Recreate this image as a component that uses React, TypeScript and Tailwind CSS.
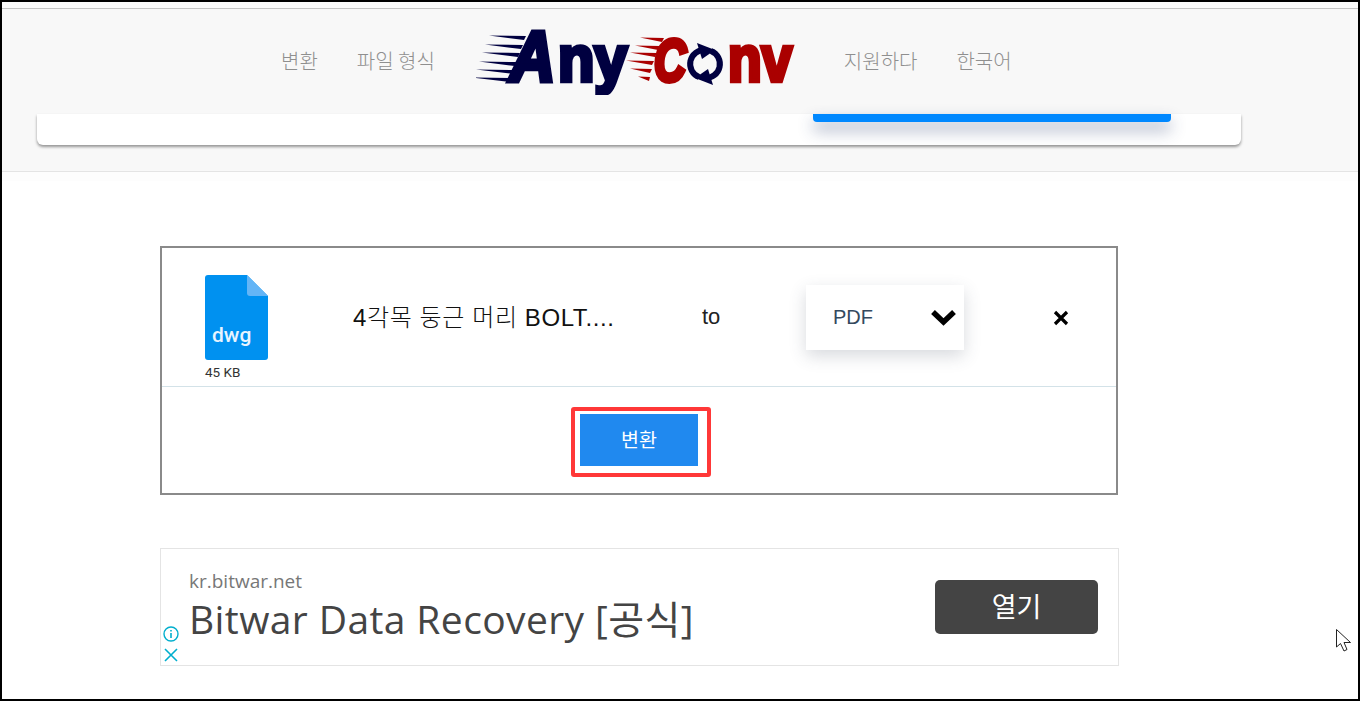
const sans = "font-['Noto_Sans_CJK_KR','Noto_Sans',sans-serif]";

function Logo() {
  const navyLines = [
    [489, 36.5, 526, 37, 524, 41],
    [485, 45.5, 523, 46, 521, 50],
    [482, 53.5, 520, 54, 518, 58],
    [479, 62.5, 517, 63, 515, 67],
    [475, 70.5, 515, 71, 514, 75],
    [472, 78.5, 512, 79, 511, 83],
  ];
  const redLines = [
    [640, 38.5, 664, 39, 662, 43],
    [635, 46.5, 660, 47, 658, 51],
    [630, 53.5, 657, 54, 655, 58],
    [626, 61.5, 654, 62, 652, 66],
    [630, 69.5, 652, 70, 650, 74],
    [638, 77.5, 650, 78, 649, 82],
  ];
  return (
    <svg width="320" height="68" viewBox="476 28 320 68" className="shrink-0">
      {navyLines.map(([x0, y0, x1, y1, x2, y2], i) => (
        <polygon key={i} points={`${x0},${y0} ${x1},${y1} ${x2},${y2}`} fill="#000040" />
      ))}
      {redLines.map(([x0, y0, x1, y1, x2, y2], i) => (
        <polygon key={i} points={`${x0},${y0} ${x1},${y1} ${x2},${y2}`} fill="#aa0000" />
      ))}
      <g fontFamily="'Liberation Sans', sans-serif" fontWeight="700">
        <text transform="translate(510 81.5) scale(0.88 1)" fontSize="71" fontStyle="italic" fill="#000040" stroke="#000040" strokeWidth="5">A</text>
        <text transform="translate(558 81.5) scale(0.93 1)" fontSize="64" fill="#000040" stroke="#000040" strokeWidth="4.5">ny</text>
        <text transform="translate(654 81.5) scale(0.74 1)" fontSize="60" fontStyle="italic" fill="#aa0000" stroke="#aa0000" strokeWidth="5">C</text>
        <text transform="translate(728 81.5) scale(0.86 1)" fontSize="64" fill="#aa0000" stroke="#aa0000" strokeWidth="4.5">nv</text>
      </g>
      <g fill="none" stroke="#000040" strokeWidth="6">
        <path d="M705 51 A14 14 0 0 0 699 78" />
        <path d="M705 79 A14 14 0 0 0 711 52" />
      </g>
      <polygon points="697,44 715,51 702,60" fill="#000040" />
      <polygon points="713,86 695,79 708,70" fill="#000040" />
    </svg>
  );
}

function NavLink({ label }: { label: string }) {
  return <span className="text-[20px] leading-none font-light text-[#8f8f8f] whitespace-nowrap">{label}</span>;
}

function FileIcon() {
  return (
    <svg width="63" height="85" viewBox="0 0 63 85" className="block">
      <path d="M3 0 H42 L63 21 V82 A3 3 0 0 1 60 85 H3 A3 3 0 0 1 0 82 V3 A3 3 0 0 1 3 0 Z" fill="#0091f0" />
      <path d="M42 0 L63 21 H45 A3 3 0 0 1 42 18 Z" fill="#64b5f6" />
      <text x="7" y="67" fontSize="21" fontWeight="500" fill="#e8f4ff" fontFamily="Roboto, sans-serif">dwg</text>
    </svg>
  );
}

export default function App() {
  return (
    <div className={`relative w-[1360px] h-[701px] overflow-hidden border-2 border-black bg-white ${sans}`}>
      <div className="h-[6px] bg-[#fbfbfb]" />
      <div className="h-[164px] bg-[#f8f8f8] border-y border-t-[#c4c4c4] border-b-[#e4e4e4]">
        <div className="h-[105px] flex items-center pb-[2px] pl-[279px]">
          <NavLink label="변환" />
          <span className="w-[39px] shrink-0" />
          <NavLink label="파일 형식" />
          <span className="w-[41px] shrink-0" />
          <Logo />
          <span className="w-[48px] shrink-0" />
          <NavLink label="지원하다" />
          <span className="w-[39px] shrink-0" />
          <NavLink label="한국어" />
        </div>
        <div className="ml-[35px] w-[1204px] h-[31px] bg-white rounded-b-[6px] shadow-[0_2px_3px_rgba(0,0,0,0.4)] pl-[776px]">
          <div className="w-[358px] h-[8px] bg-[#0088ff] rounded-b-[4px] shadow-[0_8px_16px_rgba(40,60,110,0.45)]" />
        </div>
      </div>
      <div className="h-[9px] bg-[#fdfdfd]" />

      {/* Converter box */}
      <div className="ml-[158px] mt-[65px] w-[958px] h-[249px] border-2 border-[#8a8a8a]">
        <div className="h-[139px] border-b border-[#d3e2e8] flex items-center">
          <div className="w-[191px] self-start pl-[43px] pt-[27px]">
            <FileIcon />
            <p className="mt-[4px] text-[13.5px] leading-[16px] text-[#333] font-['Roboto',sans-serif]">45 KB</p>
          </div>
          <div className="w-[349px] pt-[1px] text-[24px] leading-none tracking-[0.6px] font-light text-[#111] whitespace-nowrap font-['Liberation_Sans','Noto_Sans_CJK_KR',sans-serif]">4각목 둥근 머리 BOLT....</div>
          <div className="w-[104px] text-[22px] leading-none text-[#222] font-['Liberation_Sans',sans-serif]">to</div>
          <div className="w-[158px] h-[65px] flex items-center justify-between pl-[27px] pr-[7px] bg-white shadow-[0_6px_16px_rgba(60,70,90,0.2)]">
            <span className="text-[20px] leading-none text-[#34495e] font-['Liberation_Sans',sans-serif]">PDF</span>
            <svg width="27" height="17" viewBox="0 0 27 17">
              <path d="M3 3 L13.5 13 L24 3" fill="none" stroke="#000" strokeWidth="5.5" />
            </svg>
          </div>
          <div className="ml-[89px] pt-[2px]">
            <svg width="16" height="16" viewBox="0 0 16 16" className="block">
              <path d="M2 2 L14 14 M14 2 L2 14" stroke="#000" strokeWidth="3.2" />
            </svg>
          </div>
        </div>
        <div className="pt-[20px] pl-[409px]">
          <div className="w-[140px] h-[70px] rounded-[3px] border-[4px] border-[#ff3838] pl-[5px] pt-[3px]">
            <button className="w-[118px] h-[52px] pb-[3px] bg-[#2089ef] text-white text-[19.5px] leading-none">변환</button>
          </div>
        </div>
      </div>

      {/* Ad banner */}
      <div className="relative ml-[158px] mt-[53px] w-[959px] h-[118px] border border-[#e4e4e4] flex items-center justify-between pl-[28px] pr-[20px]">
        <div className="pb-[3px] font-['Open_Sans','Noto_Sans_CJK_KR',sans-serif]">
          <p className="text-[19px] leading-[22px] text-[#777]">kr.bitwar.net</p>
          <p className="mt-[4px] text-[39px] leading-[46px] tracking-[0.4px] text-[#444] whitespace-nowrap">Bitwar Data Recovery [공식]</p>
        </div>
        <button className="w-[163px] h-[54px] pb-[3px] rounded-[5px] bg-[#444] text-white text-[27px] leading-none">열기</button>
        <svg width="16" height="16" viewBox="0 0 16 16" className="absolute left-[2px] top-[77px]">
          <circle cx="8" cy="8" r="7" fill="none" stroke="#00aecd" strokeWidth="1.4" />
          <path d="M8 7 V12 M8 4 V5.6" stroke="#00aecd" strokeWidth="1.6" />
        </svg>
        <svg width="16" height="16" viewBox="0 0 16 16" className="absolute left-[2px] top-[98px]">
          <path d="M2 2 L14 14 M14 2 L2 14" stroke="#00aecd" strokeWidth="1.6" />
        </svg>
      </div>

      {/* Mouse cursor */}
      <svg width="18" height="25" viewBox="0 0 18 25" className="absolute left-[1333px] top-[626px]">
        <path d="M1.5 1.5 V19 L5.5 15.5 L9 23 L12 21.5 L9 14.5 L15.5 14.5 Z" fill="#fff" stroke="#222" strokeWidth="1" />
      </svg>
    </div>
  );
}
